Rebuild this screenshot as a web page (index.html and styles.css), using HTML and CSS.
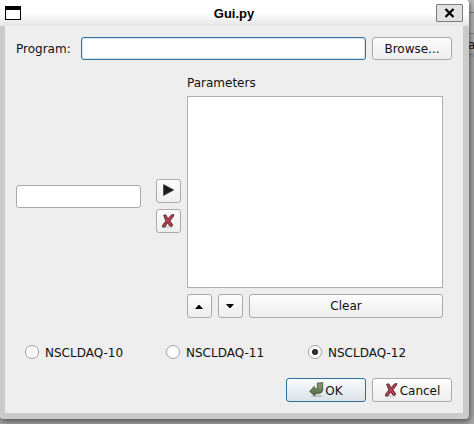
FILE: index.html
```html
<!DOCTYPE html>
<html lang="en">
<head>
<meta charset="utf-8">
<title>Gui.py</title>
<link rel="stylesheet" href="styles.css">
</head>
<body>
<svg class="defs" aria-hidden="true">
  <defs>
    <linearGradient id="green" x1="0" y1="0" x2="0" y2="1"><stop offset="0" stop-color="#8da078"/><stop offset="1" stop-color="#4d6340"/></linearGradient>
    <symbol id="cross" viewBox="0 0 16 16">
      <ellipse cx="7" cy="14.3" rx="6" ry="1.2" fill="#000" opacity=".1"/>
      <path d="M2.6 2.3 4.7 1.8 7 5.8 10.6 1.8 12.8 1.6 12.5 3.3 8.9 7.9 11.8 12 10.6 13.4 8.9 13 6.5 9.9 3.9 14 1.6 14 1.6 12.3 4.9 7.9Z" fill="#b63f4b" stroke="#4a2b2f" stroke-width=".9" stroke-linejoin="round"/>
    </symbol>
  </defs>
</svg>
<div class="window">
  <header class="titlebar">
    <span class="window-icon"></span>
    <span class="title">Gui.py</span>
    <button class="close" aria-label="Close"><svg width="11" height="10" viewBox="0 0 11 10"><path d="M1.5 1 9.5 9M9.5 1 1.5 9" stroke="#000" stroke-width="2.3"/></svg></button>
  </header>
  <main class="content">
    <div class="program">
      <label for="program">Program:</label>
      <input id="program" class="field focused" type="text">
      <button class="button wide">Browse...</button>
    </div>
    <div class="editor">
      <input class="field value" type="text" aria-label="Parameter value">
      <div class="actions">
        <button class="button small" aria-label="Add"><svg class="play" width="13" height="14" viewBox="0 0 13 14"><path d="M1.5 1.5 11.8 7 1.5 12.5Z" fill="#1c1c1c" stroke="#333" stroke-width=".6"/></svg></button>
        <button class="button small" aria-label="Remove"><svg width="16" height="16"><use href="#cross"/></svg></button>
      </div>
      <div class="parameters">
        <div class="caption">Parameters</div>
        <div class="list"></div>
        <div class="list-buttons">
          <button class="button small" aria-label="Up"><svg class="arrow up" width="8" height="4" viewBox="0 0 8 4"><path d="M0 4 3.5 0H4.5L8 4Z"/></svg></button>
          <button class="button small" aria-label="Down"><svg class="arrow" width="8" height="4" viewBox="0 0 8 4"><path d="M0 0 3.5 4H4.5L8 0Z"/></svg></button>
          <button class="button clear">Clear</button>
        </div>
      </div>
    </div>
    <div class="versions">
      <label class="radio"><span class="dot"></span><span class="text">NSCLDAQ-10</span></label>
      <label class="radio"><span class="dot"></span><span class="text">NSCLDAQ-11</span></label>
      <label class="radio"><span class="dot checked"></span><span class="text">NSCLDAQ-12</span></label>
    </div>
    <div class="dialog-buttons">
      <button class="button wide default"><svg width="16" height="16" viewBox="0 0 16 16"><ellipse cx="8" cy="14" rx="6" ry="1.3" fill="#000" opacity=".15"/><path d="M8.3 1.1 13.7.7V8.3Q13.2 10.8 11 11.2L6 11.6V14L.7 9.4 5.3 4.3V6.8H8.4Z" fill="url(#green)" stroke="#46583b" stroke-width=".9" stroke-linejoin="round"/></svg><span class="text">OK</span></button>
      <button class="button wide"><svg width="16" height="16"><use href="#cross"/></svg><span class="text">Cancel</span></button>
    </div>
  </main>
</div>
<aside class="backdrop"><div class="backdrop-toolbar"></div><div class="backdrop-tab">a</div></aside>
</body>
</html>
```
FILE: styles.css
```css
* { box-sizing: border-box; }
body {
  margin: 0;
  width: 474px;
  height: 424px;
  overflow: hidden;
  display: flex;
  background: #a3a3a3;
  color: #101010;
  font: 12px/14px "DejaVu Sans", sans-serif;
}
.defs { position: absolute; width: 0; height: 0; }
button, input { margin: 0; padding: 0; font: inherit; color: inherit; }
.window {
  position: relative;
  z-index: 1;
  width: 469px;
  height: 419px;
  flex: none;
  display: flex;
  flex-direction: column;
  background: #cbcbcb;
  border-radius: 0 3px 4px 3px;
  box-shadow: 1px 2px 6px rgba(0, 0, 0, .55);
}
.titlebar {
  height: 26px;
  display: grid;
  grid-template-columns: 32px 1fr 32px;
  align-items: center;
  padding: 0 6px 0 5px;
  border-radius: 0 3px 0 0;
  background: linear-gradient(#fff 0, #fff 50%, #e5e5e5 100%);
}
.window-icon {
  width: 16px;
  height: 14px;
  border: 1px solid #000;
  border-top-width: 4px;
  background: #fff;
}
.title {
  text-align: center;
  font: bold 13px/15px "Liberation Sans", sans-serif;
  color: #000;
}
.close {
  width: 27px;
  height: 18px;
  justify-self: end;
  display: grid;
  place-items: center;
  border: 1px solid #7c7c7c;
  border-radius: 1px;
  background: #e2e2e2;
}
.content {
  flex: 1;
  margin: 0 6px 6px 5px;
  padding: 11px 11px 0;
  background: #eee;
}
.program { display: flex; align-items: center; height: 23px; }
.program label { width: 65px; }
.field {
  height: 23px;
  border: 1px solid #a9a9a9;
  border-radius: 3px;
  background: #fff;
  outline: 0;
}
.focused {
  width: 285px;
  margin-right: 6px;
  border-color: #30709c;
  box-shadow: inset 0 0 0 1px #dce8f0;
}
.button {
  height: 24px;
  display: flex;
  align-items: center;
  justify-content: center;
  border: 1px solid #aaa;
  border-radius: 3px;
  background: linear-gradient(#fdfdfd, #eee);
}
.program .button { height: 23px; }
.wide { width: 80px; }
.small { width: 25px; }
.small svg, .wide svg { flex: none; }
.text { padding-top: 2px; }
.small .play { margin: -2px 1px 0 0; }
.small .arrow { margin-right: 1px; }
.small .up { margin-top: 2px; }
.default {
  border-color: #2b7199;
  background: linear-gradient(#fafcfd, #dae2e8);
}
.editor { display: flex; height: 258px; }
.value { width: 125px; margin: 125px 15px 0 0; }
.actions {
  display: flex;
  flex-direction: column;
  gap: 6px;
  margin: 119px 6px 0 0;
}
.parameters { width: 256px; padding-top: 16px; }
.caption { height: 20px; }
.list { height: 192px; border: 1px solid #b0b0b0; background: #fff; }
.list-buttons { display: flex; gap: 6px; margin-top: 6px; }
.clear { flex: 1; }
.versions {
  display: grid;
  grid-template-columns: 141px 142px 1fr;
  margin: 26px 0 0 9px;
}
.radio { display: flex; align-items: center; gap: 6px; height: 16px; }
.dot {
  width: 14px;
  height: 14px;
  border: 1px solid #a0a0a0;
  border-radius: 50%;
  background: #fff;
}
.checked { background: radial-gradient(circle, #333 2.8px, #fff 3.5px); }
.dialog-buttons {
  display: flex;
  justify-content: flex-end;
  gap: 6px;
  margin-top: 18px;
}
.backdrop { flex: none; width: 5px; overflow: hidden; background: #a8a8a8; }
.backdrop-toolbar {
  height: 34px;
  border-top: 12px solid #bcbcbc;
  border-bottom: 1px solid #858585;
  background: linear-gradient(#858585 1px, #b6b6b6 1px);
}
.backdrop-tab {
  height: 23px;
  padding-top: 4px;
  text-indent: -1px;
  border-bottom: 4px solid #929ba3;
  background: #b0b0b0;
}
```
